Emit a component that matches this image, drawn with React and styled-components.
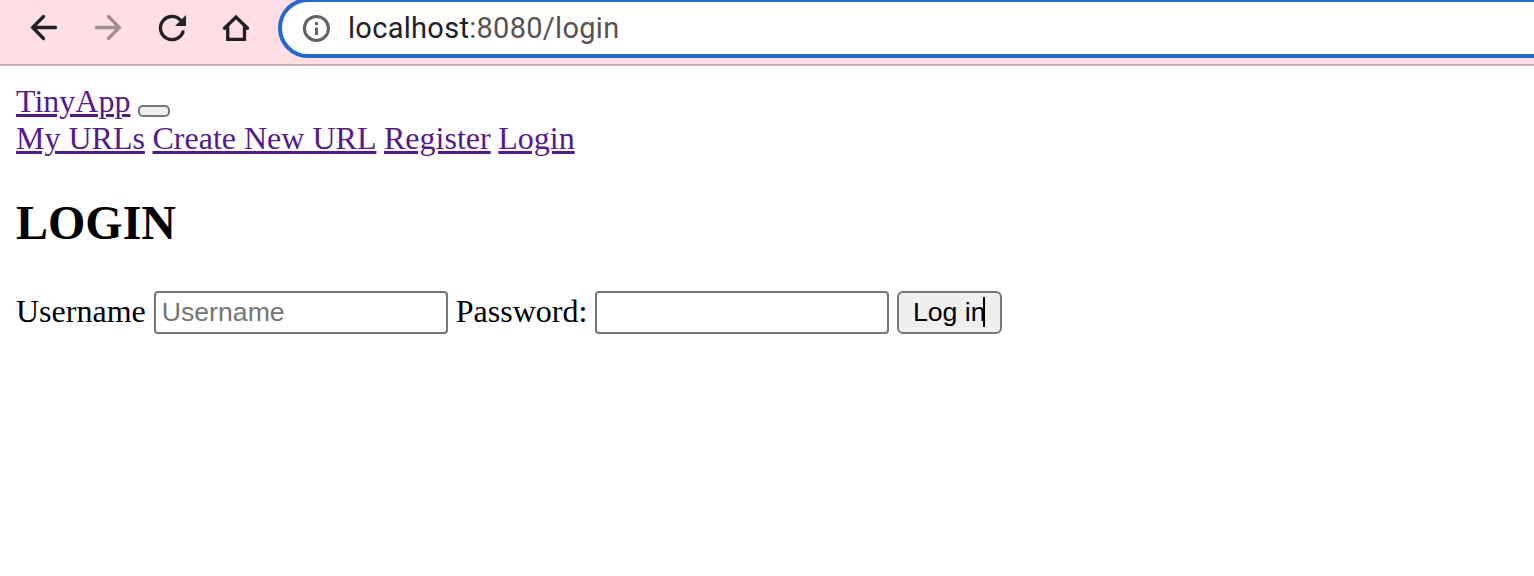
import React from "react";
import styled, { createGlobalStyle } from "styled-components";

const GlobalStyle = createGlobalStyle`
  * { box-sizing: border-box; }
  body {
    margin: 0;
    background: #fff;
    color: #000;
    font-family: "Liberation Serif", "Times New Roman", serif;
    font-size: 32px;
    overflow: hidden;
  }
`;

const Toolbar = styled.header`
  display: flex;
  align-items: flex-start;
  height: 66px;
  background: #ffdee5;
  border-bottom: 2px solid #cbb0b9;
  overflow: hidden;
`;

const NavButtons = styled.div`
  display: flex;
  flex: none;
  gap: 24px;
  width: 278px;
  padding: 8px 0 0 24px;
`;

const NavIcon = styled.svg`
  flex: none;
  width: 40px;
  height: 40px;
  fill: none;
  stroke: #202124;
  stroke-width: 3.3;
  stroke-linecap: round;
  opacity: ${(p) => (p.$disabled ? 0.42 : 1)};
`;

const AddressBar = styled.div`
  display: flex;
  align-items: center;
  flex: 1;
  height: 60px;
  margin: -2px -40px 0 0;
  padding-left: 20px;
  background: #fff;
  border: 4px solid #2168d1;
  border-radius: 30px;
`;

const InfoIcon = styled.svg`
  flex: none;
  width: 28px;
  height: 28px;
`;

const Address = styled.span`
  margin-left: 18px;
  font: 29px/56px Roboto, sans-serif;
  letter-spacing: 0.29px;
  color: #5a5153;
  white-space: nowrap;
`;

const Host = styled.span`
  color: #202124;
`;

const Page = styled.main`
  padding: 17px 16px 0;
`;

const NavRow = styled.div`
  display: flex;
  align-items: baseline;
  gap: 7.6px;
  height: 37px;
  line-height: 37px;
`;

const Link = styled.a`
  color: #551a8b;
  text-decoration: underline;
  text-decoration-thickness: 3px;
  text-underline-offset: 2px;
  white-space: nowrap;
`;

const Toggler = styled.button`
  align-self: flex-start;
  width: 32px;
  height: 12px;
  margin: 22px 0 0;
  padding: 0;
  background: #efefef;
  border: 2px solid #767676;
  border-radius: 5px;
`;

const Title = styled.h2`
  margin: 38px 0 39px;
  font-size: 48px;
  line-height: 56px;
  font-weight: bold;
`;

const Form = styled.form`
  display: flex;
  align-items: flex-start;
  gap: 8px;
`;

const Label = styled.label`
  line-height: 42px;
  white-space: nowrap;
`;

const Input = styled.input`
  width: 294px;
  height: 43px;
  margin: 1px 0 0;
  padding: 2px 6px;
  border: 2px solid #767676;
  border-radius: 4px;
  background: #fff;
  font: 26.67px "Liberation Sans", Arial, sans-serif;
  outline: none;
  &::placeholder { color: #757575; opacity: 1; }
`;

const Submit = styled.button`
  position: relative;
  width: 105px;
  height: 43px;
  margin: 1px 0 0;
  padding: 0 1px 0 0;
  background: #efefef;
  border: 2px solid #767676;
  border-radius: 6px;
  color: #000;
  font: 26.67px "Liberation Sans", Arial, sans-serif;
  white-space: nowrap;
`;

const TextCursor = styled.span`
  position: absolute;
  top: 4px;
  right: 15px;
  width: 2px;
  height: 30px;
  background: #000;
`;

export default function App() {
  return (
    <>
      <GlobalStyle />
      <Toolbar>
        <NavButtons>
          <NavIcon viewBox="0 0 40 40">
            <path d="M31.500 19.500H9M19.500 8.500 8.700 19.500 19.500 30.500" />
          </NavIcon>
          <NavIcon viewBox="0 0 40 40" $disabled>
            <path d="M8.500 19.500H31M20.500 8.500 31.300 19.500 20.500 30.500" />
          </NavIcon>
          <NavIcon viewBox="0 0 40 40">
            <path d="M28.200 11.800A11.600 11.600 0 1 0 31 23.900" />
            <path d="M34 7V18H23Z" fill="#202124" stroke="none" />
          </NavIcon>
          <NavIcon viewBox="0 0 40 40">
            <path d="M8.500 20.300 20 9 31.500 20.300M11.700 18.500V31.400H28.500V18.500" />
          </NavIcon>
        </NavButtons>
        <AddressBar>
          <InfoIcon viewBox="0 0 28 28">
            <circle cx="14.400" cy="14.400" r="12" fill="none" stroke="#5f6368" strokeWidth="3" />
            <path d="M13 8H16V11H13ZM13 13.500H16V21H13Z" fill="#5f6368" />
          </InfoIcon>
          <Address>
            <Host>localhost</Host>:8080/login
          </Address>
        </AddressBar>
      </Toolbar>
      <Page>
        <nav>
          <NavRow>
            <Link>TinyApp</Link>
            <Toggler type="button" />
          </NavRow>
          <NavRow>
            <Link>My URLs</Link>
            <Link>Create New URL</Link>
            <Link>Register</Link>
            <Link>Login</Link>
          </NavRow>
        </nav>
        <Title>LOGIN</Title>
        <Form>
          <Label htmlFor="username">Username</Label>
          <Input id="username" placeholder="Username" />
          <Label htmlFor="password">Password:</Label>
          <Input id="password" type="password" />
          <Submit type="button">
            Log in
            <TextCursor />
          </Submit>
        </Form>
      </Page>
    </>
  );
}
